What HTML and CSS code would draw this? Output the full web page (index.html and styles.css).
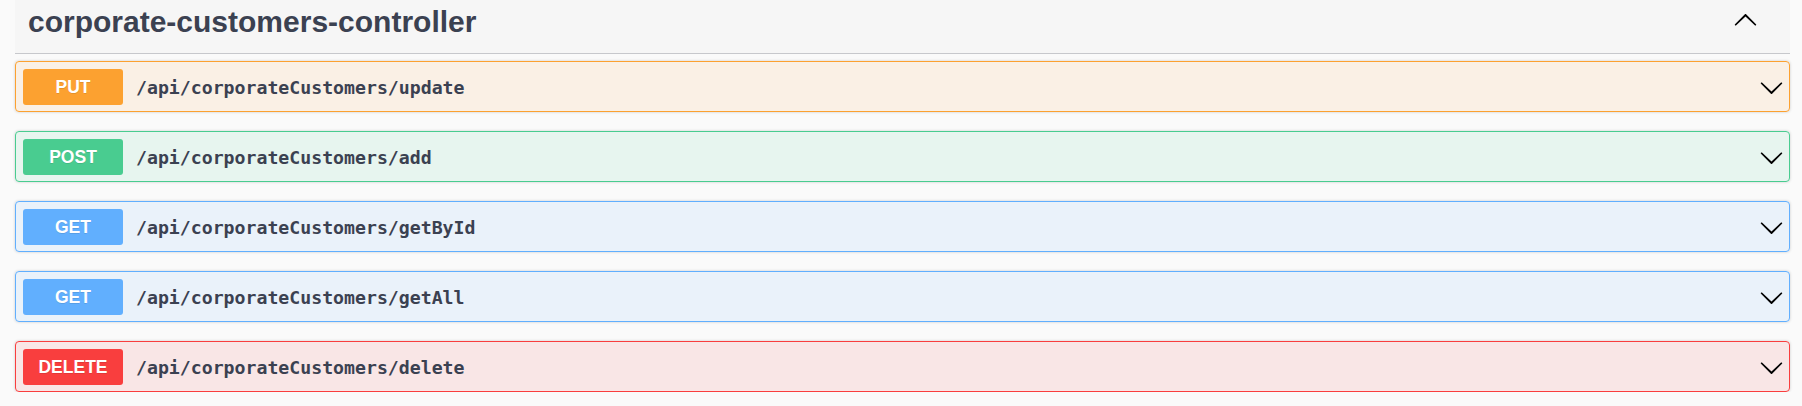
FILE: index.html
```html
<!DOCTYPE html>
<html lang="en">
<head>
<meta charset="utf-8">
<title>corporate-customers-controller</title>
<link rel="stylesheet" href="styles.css">
</head>
<body>
<section class="tag-section">
  <div class="tag-header">
    <h3 class="tag-title">corporate-customers-controller</h3>
    <svg class="arrow arrow-up" viewBox="0 0 20 20" width="25" height="25" aria-hidden="true">
      <path d="M17.418 6.109c.272-.268.709-.268.979 0s.271.701 0 .969l-7.908 7.83c-.27.268-.707.268-.979 0l-7.908-7.83c-.27-.268-.27-.701 0-.969.271-.268.709-.268.979 0L10 13.25l7.418-7.141z"/>
    </svg>
  </div>
  <div class="ops">
    <div class="op op-put">
      <span class="method">PUT</span>
      <span class="path">/api/corporateCustomers/update</span>
      <svg class="arrow" viewBox="0 0 20 20" width="25" height="25" aria-hidden="true"><path d="M17.418 6.109c.272-.268.709-.268.979 0s.271.701 0 .969l-7.908 7.83c-.27.268-.707.268-.979 0l-7.908-7.83c-.27-.268-.27-.701 0-.969.271-.268.709-.268.979 0L10 13.25l7.418-7.141z"/></svg>
    </div>
    <div class="op op-post">
      <span class="method">POST</span>
      <span class="path">/api/corporateCustomers/add</span>
      <svg class="arrow" viewBox="0 0 20 20" width="25" height="25" aria-hidden="true"><path d="M17.418 6.109c.272-.268.709-.268.979 0s.271.701 0 .969l-7.908 7.83c-.27.268-.707.268-.979 0l-7.908-7.83c-.27-.268-.27-.701 0-.969.271-.268.709-.268.979 0L10 13.25l7.418-7.141z"/></svg>
    </div>
    <div class="op op-get">
      <span class="method">GET</span>
      <span class="path">/api/corporateCustomers/getById</span>
      <svg class="arrow" viewBox="0 0 20 20" width="25" height="25" aria-hidden="true"><path d="M17.418 6.109c.272-.268.709-.268.979 0s.271.701 0 .969l-7.908 7.83c-.27.268-.707.268-.979 0l-7.908-7.83c-.27-.268-.27-.701 0-.969.271-.268.709-.268.979 0L10 13.25l7.418-7.141z"/></svg>
    </div>
    <div class="op op-get">
      <span class="method">GET</span>
      <span class="path">/api/corporateCustomers/getAll</span>
      <svg class="arrow" viewBox="0 0 20 20" width="25" height="25" aria-hidden="true"><path d="M17.418 6.109c.272-.268.709-.268.979 0s.271.701 0 .969l-7.908 7.83c-.27.268-.707.268-.979 0l-7.908-7.83c-.27-.268-.27-.701 0-.969.271-.268.709-.268.979 0L10 13.25l7.418-7.141z"/></svg>
    </div>
    <div class="op op-delete">
      <span class="method">DELETE</span>
      <span class="path">/api/corporateCustomers/delete</span>
      <svg class="arrow" viewBox="0 0 20 20" width="25" height="25" aria-hidden="true"><path d="M17.418 6.109c.272-.268.709-.268.979 0s.271.701 0 .969l-7.908 7.83c-.27.268-.707.268-.979 0l-7.908-7.83c-.27-.268-.27-.701 0-.969.271-.268.709-.268.979 0L10 13.25l7.418-7.141z"/></svg>
    </div>
  </div>
</section>
</body>
</html>
```

FILE: styles.css
```css
html, body {
  margin: 0;
  padding: 0;
  background: #fafafa;
}

body {
  font-family: "Liberation Sans", Arial, sans-serif;
  color: #3b4151;
}

.tag-section {
  margin-left: 15px;
  width: 1775px;
}

.tag-header {
  box-sizing: border-box;
  height: 54px;
  display: flex;
  align-items: flex-start;
  padding: 5px 0 0 13px;
  background: #f6f6f6;
  border-bottom: 1px solid rgba(59, 65, 81, 0.25);
}

.tag-title {
  flex: 1;
  margin: 0;
  font-size: 30px;
  line-height: 34.5px;
  font-weight: 700;
  color: #3b4151;
}

.arrow {
  flex: none;
  fill: #000;
}

.arrow-up {
  margin: 3px 32px 0 0;
  transform: rotate(180deg);
}

.ops {
  padding-top: 7px;
  display: flex;
  flex-direction: column;
  gap: 19px;
}

.op {
  box-sizing: border-box;
  height: 51px;
  display: flex;
  align-items: center;
  padding: 0 5px 0 7px;
  border: 1px solid;
  border-radius: 4px;
  box-shadow: 0 0 3px rgba(0, 0, 0, 0.19);
}

.op .arrow {
  margin-top: 1px;
}

.method {
  flex: none;
  box-sizing: border-box;
  width: 100px;
  height: 36px;
  margin-top: 1px;
  display: flex;
  align-items: center;
  justify-content: center;
  border-radius: 3px;
  color: #fff;
  font-size: 17.5px;
  font-weight: 700;
  text-shadow: 0 1px 0 rgba(0, 0, 0, 0.1);
}

.path {
  flex: 1;
  padding: 0 13px;
  font-family: "DejaVu Sans Mono", "Liberation Mono", monospace;
  font-size: 18.2px;
  font-weight: 700;
  color: #3b4151;
  margin-top: 2px;
}

.op-put { background: rgba(252, 161, 48, 0.1); border-color: #fca130; }
.op-put .method { background: #fca130; }

.op-post { background: rgba(73, 204, 144, 0.1); border-color: #49cc90; }
.op-post .method { background: #49cc90; }

.op-get { background: rgba(97, 175, 254, 0.1); border-color: #61affe; }
.op-get .method { background: #61affe; }

.op-delete { background: rgba(249, 62, 62, 0.1); border-color: #f93e3e; }
.op-delete .method { background: #f93e3e; }
```
